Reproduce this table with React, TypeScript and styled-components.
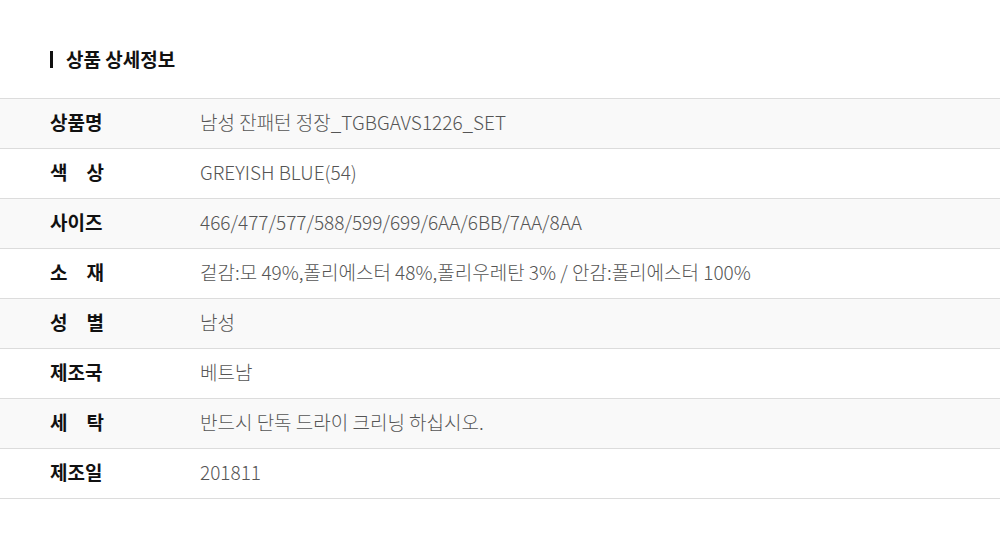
import React from "react";
import styled, { createGlobalStyle } from "styled-components";

const Global = createGlobalStyle`
  html, body { margin: 0; padding: 0; background: #fff; }
  body { font-family: "Noto Sans CJK KR", "Noto Sans", sans-serif; }
`;

const Page = styled.div`
  width: 1000px;
  padding-top: 46px;
`;

const Title = styled.h2`
  display: flex;
  align-items: center;
  margin: 0 0 26px 50px;
  font-size: 19px;
  font-weight: 700;
  color: #111;
  line-height: 26px;
  &::before {
    content: "";
    width: 3px;
    height: 17px;
    background: #111;
    margin-right: 13px;
    margin-top: 1px;
  }
`;

const Table = styled.div`
  border-top: 1px solid #dcdcdc;
`;

const Row = styled.div<{ $shade: boolean }>`
  display: flex;
  align-items: center;
  box-sizing: border-box;
  height: 50px;
  padding-bottom: 4px;
  border-bottom: 1px solid #dcdcdc;
  background: ${(p) => (p.$shade ? "#f9f9f9" : "#fff")};
`;

const Label = styled.div`
  width: 54px;
  margin-left: 50px;
  margin-right: 96px;
  font-size: 19px;
  font-weight: 700;
  color: #111;
  text-align: justify;
  text-align-last: justify;
  white-space: nowrap;
`;

const Value = styled.div`
  font-size: 19px;
  font-weight: 300;
  color: #555;
  white-space: nowrap;
`;

const rows: [string, string][] = [
  ["상품명", "남성 잔패턴 정장_TGBGAVS1226_SET"],
  ["색 상", "GREYISH BLUE(54)"],
  ["사이즈", "466/477/577/588/599/699/6AA/6BB/7AA/8AA"],
  ["소 재", "겉감:모 49%,폴리에스터 48%,폴리우레탄 3% / 안감:폴리에스터 100%"],
  ["성 별", "남성"],
  ["제조국", "베트남"],
  ["세 탁", "반드시 단독 드라이 크리닝 하십시오."],
  ["제조일", "201811"],
];

export default function App() {
  return (
    <Page>
      <Global />
      <Title>상품 상세정보</Title>
      <Table>
        {rows.map(([k, v], i) => (
          <Row key={k} $shade={i % 2 === 0}>
            <Label>{k}</Label>
            <Value>{v}</Value>
          </Row>
        ))}
      </Table>
    </Page>
  );
}
